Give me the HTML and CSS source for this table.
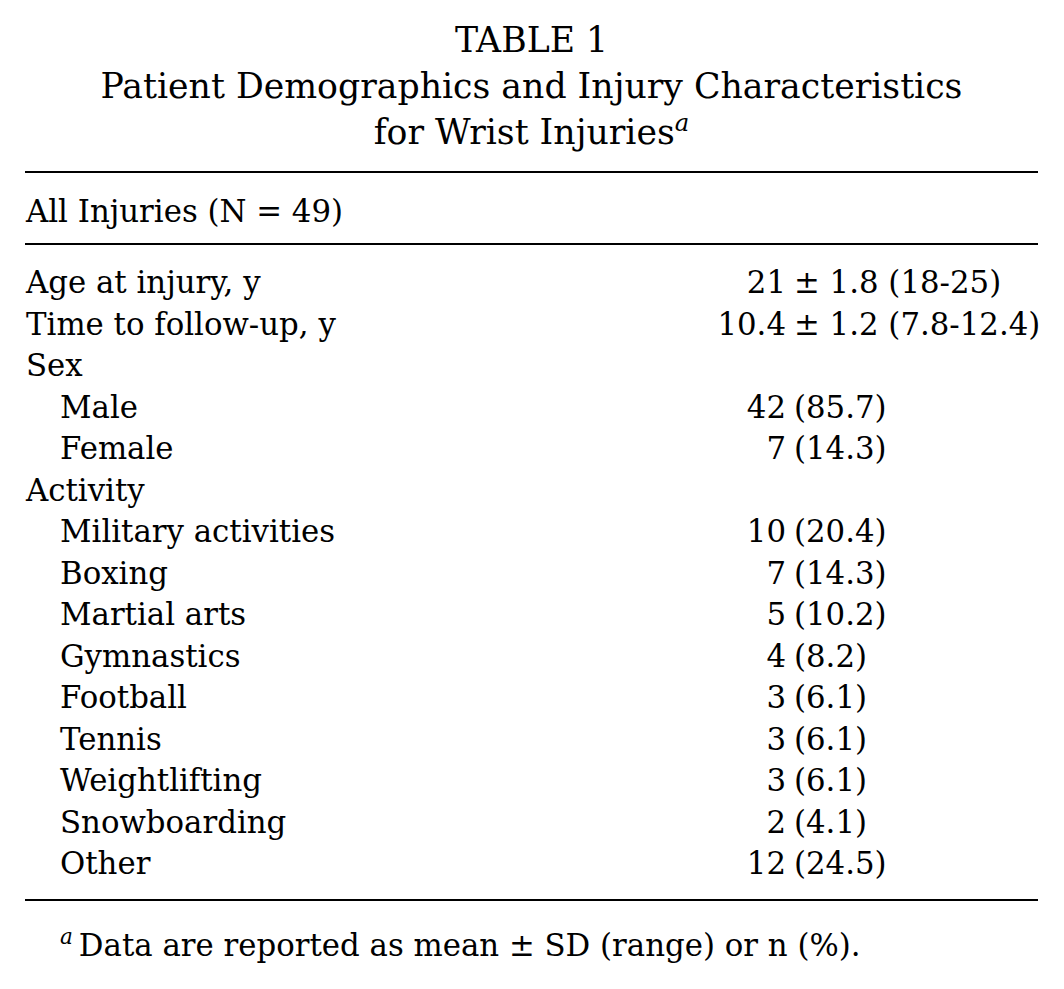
FILE: index.html
```html
<!DOCTYPE html>
<html lang="en">
<head>
<meta charset="utf-8">
<title>Table 1</title>
<link rel="stylesheet" href="styles.css">
</head>
<body>
<div class="page">
  <div class="caption">
    <div class="cap-line">TABLE 1</div>
    <div class="cap-line">Patient Demographics and Injury Characteristics</div>
    <div class="cap-line">for Wrist Injuries<sup class="fn">a</sup></div>
  </div>
  <div class="rule top"></div>
  <div class="head">All Injuries (N = 49)</div>
  <div class="rule mid"></div>
  <div class="body">
    <div class="row"><span class="label">Age at injury, y</span><span class="num">21</span><span class="rest">± 1.8 (18-25)</span></div>
    <div class="row"><span class="label">Time to follow-up, y</span><span class="num">10.4</span><span class="rest">± 1.2 (7.8-12.4)</span></div>
    <div class="row"><span class="label">Sex</span><span class="num"></span><span class="rest"></span></div>
    <div class="row sub"><span class="label">Male</span><span class="num">42</span><span class="rest">(85.7)</span></div>
    <div class="row sub"><span class="label">Female</span><span class="num">7</span><span class="rest">(14.3)</span></div>
    <div class="row"><span class="label">Activity</span><span class="num"></span><span class="rest"></span></div>
    <div class="row sub"><span class="label">Military activities</span><span class="num">10</span><span class="rest">(20.4)</span></div>
    <div class="row sub"><span class="label">Boxing</span><span class="num">7</span><span class="rest">(14.3)</span></div>
    <div class="row sub"><span class="label">Martial arts</span><span class="num">5</span><span class="rest">(10.2)</span></div>
    <div class="row sub"><span class="label">Gymnastics</span><span class="num">4</span><span class="rest">(8.2)</span></div>
    <div class="row sub"><span class="label">Football</span><span class="num">3</span><span class="rest">(6.1)</span></div>
    <div class="row sub"><span class="label">Tennis</span><span class="num">3</span><span class="rest">(6.1)</span></div>
    <div class="row sub"><span class="label">Weightlifting</span><span class="num">3</span><span class="rest">(6.1)</span></div>
    <div class="row sub"><span class="label">Snowboarding</span><span class="num">2</span><span class="rest">(4.1)</span></div>
    <div class="row sub"><span class="label">Other</span><span class="num">12</span><span class="rest">(24.5)</span></div>
  </div>
  <div class="rule bottom"></div>
  <div class="footnote"><sup class="fn foot-a">a</sup>Data are reported as mean ± SD (range) or n (%).</div>
</div>
</body>
</html>
```
FILE: styles.css
```css
html, body {
  margin: 0;
  padding: 0;
  background: #ffffff;
}
body {
  color: #000000;
  font-family: "DejaVu Serif", "Liberation Serif", serif;
}
.page {
  width: 1013px;
  margin-left: 25px;
  padding-top: 17px;
}
.caption {
  text-align: center;
  font-size: 34.7px;
  line-height: 46px;
}
.fn {
  font-style: italic;
  font-size: 0.7em;
  line-height: 0;
  vertical-align: 0.55em;
}
.foot-a {
  margin-right: 6px;
}
.rule {
  border-top: 2px solid #000;
  height: 0;
}
.rule.top {
  margin-top: 16px;
}
.head {
  font-size: 30.8px;
  line-height: 41px;
  padding: 18px 0 11px 1px;
}
.body {
  padding: 17px 0 12px 0;
  font-size: 30.8px;
  line-height: 41.5px;
}
.row {
  display: grid;
  grid-template-columns: 683px 78px 252px;
}
.row.sub .label {
  padding-left: 35px;
}
.label {
  padding-left: 1px;
}
.num {
  text-align: right;
}
.rest {
  padding-left: 8px;
  white-space: nowrap;
}
.rule.bottom {
  margin-top: 2px;
}
.footnote {
  font-size: 30.8px;
  line-height: 41px;
  padding: 24px 0 0 35px;
}
```
